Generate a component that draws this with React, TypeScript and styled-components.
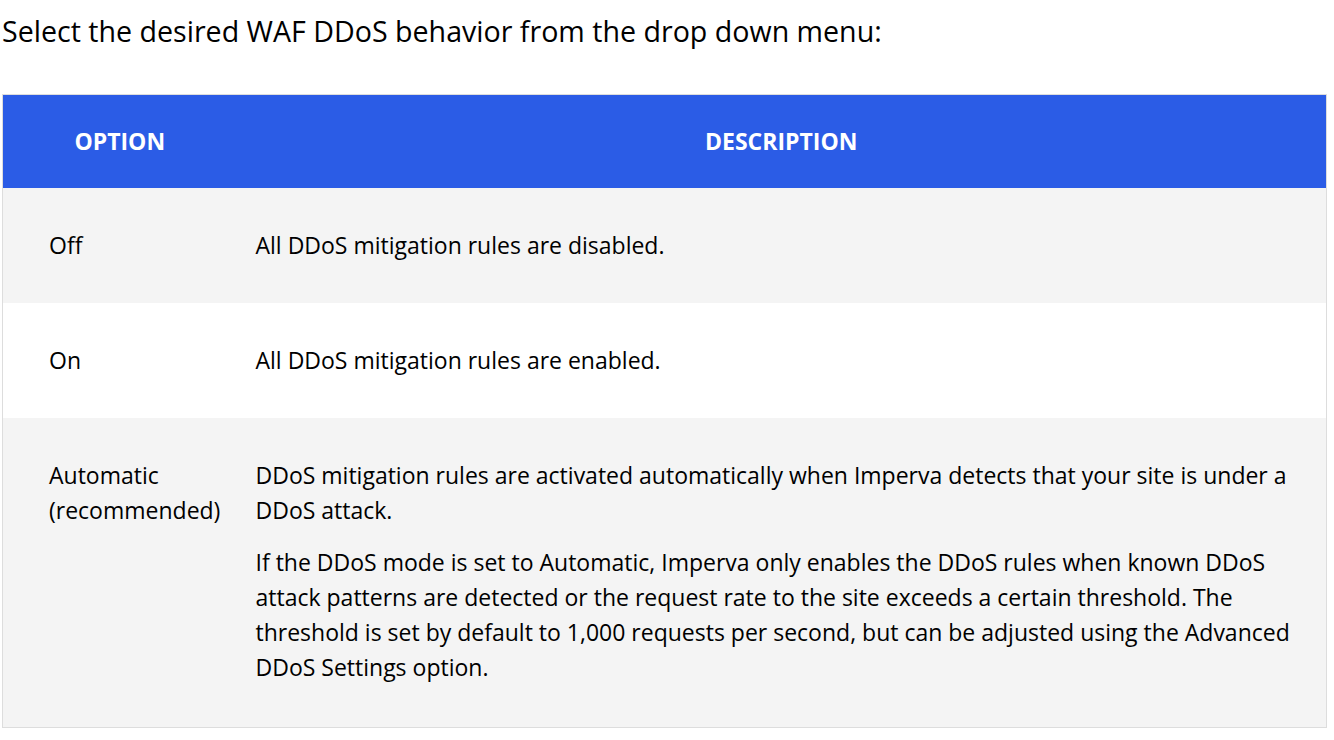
import styled, { createGlobalStyle } from "styled-components";

const GlobalStyle = createGlobalStyle`
  body {
    margin: 0;
    background: #ffffff;
    font-family: "Open Sans", "Noto Sans", sans-serif;
    color: #000000;
  }
`;

const rows = [
  { option: ["Off"], text: ["All DDoS mitigation rules are disabled."] },
  { option: ["On"], text: ["All DDoS mitigation rules are enabled."] },
  {
    option: ["Automatic", "(recommended)"],
    text: [
      "DDoS mitigation rules are activated automatically when Imperva detects that your site is under a DDoS attack.",
      "If the DDoS mode is set to Automatic, Imperva only enables the DDoS rules when known DDoS attack patterns are detected or the request rate to the site exceeds a certain threshold. The threshold is set by default to 1,000 requests per second, but can be adjusted using the Advanced DDoS Settings option.",
    ],
  },
];

const App = () => {
  return (
    <Wrapper>
      <GlobalStyle />
      <Intro>Select the desired WAF DDoS behavior from the drop down menu:</Intro>
      <Table>
        <colgroup>
          <col style={{ width: 234 }} />
          <col />
        </colgroup>
        <thead>
          <tr>
            <HeadCell>OPTION</HeadCell>
            <HeadCell>DESCRIPTION</HeadCell>
          </tr>
        </thead>
        <tbody>
          {rows.map((row, i) => (
            <Row key={i} $shaded={i % 2 === 0}>
              <OptionCell>
                {row.option.map((o) => (
                  <div key={o}>{o}</div>
                ))}
              </OptionCell>
              <DescCell>
                {row.text.map((t, j) => (
                  <Para key={j}>{t}</Para>
                ))}
              </DescCell>
            </Row>
          ))}
        </tbody>
      </Table>
    </Wrapper>
  );
};

const Wrapper = styled.main`
  padding: 12px 7px 0 2px;
`;

const Intro = styled.p`
  margin: 0 0 45px;
  font-size: 28.6px;
  line-height: 37px;
`;

const Table = styled.table`
  width: 100%;
  border-collapse: collapse;
  border: 1px solid #dddddd;
  font-size: 23px;
  line-height: 35px;
`;

const HeadCell = styled.th`
  background: #2b5ce6;
  color: #ffffff;
  font-weight: 700;
  height: 93px;
  padding: 0;
  text-align: center;
  vertical-align: middle;
`;

const Row = styled.tr<{ $shaded: boolean }>`
  background: ${(p) => (p.$shaded ? "#f4f4f4" : "#ffffff")};
`;

const OptionCell = styled.td`
  padding: 40px 10px 40px 46px;
  vertical-align: top;
`;

const DescCell = styled.td`
  padding: 40px 24px 40px 19px;
  vertical-align: top;
`;

const Para = styled.p`
  margin: 0;
  & + & {
    margin-top: 17px;
  }
  &:not(:only-child):last-child {
    margin-bottom: 2px;
  }
`;

export default App;
